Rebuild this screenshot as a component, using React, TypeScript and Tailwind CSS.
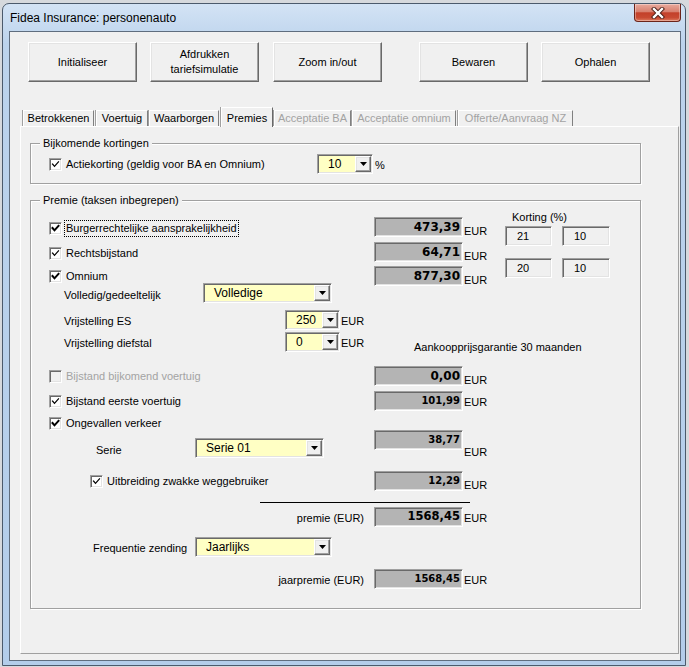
import React from 'react';

const sunken =
  'border border-t-[#a0a0a0] border-l-[#a0a0a0] border-b-white border-r-white shadow-[inset_1px_1px_0_#696969,inset_-1px_-1px_0_#e3e3e3]';
const raised =
  'border border-t-white border-l-white border-b-[#696969] border-r-[#696969] shadow-[inset_-1px_-1px_0_#a0a0a0,inset_1px_1px_0_#e3e3e3]';

const CheckBox = ({ checked = true, bold = false, disabled = false }: { checked?: boolean; bold?: boolean; disabled?: boolean }) => (
  <span
    className={`w-[13px] h-[13px] shrink-0 flex items-center justify-center border border-t-[#a0a0a0] border-l-[#a0a0a0] border-b-white border-r-white shadow-[inset_1px_1px_0_#696969,inset_-1px_-1px_0_#e3e3e3] ${
      disabled ? 'bg-[#f0f0f0]' : 'bg-white'
    }`}
  >
    {checked && (
      <svg width="9" height="9" viewBox="0 0 9 9">
        <polyline
          points="1.5,4 3.5,6.3 7.5,1.8"
          fill="none"
          stroke="#000"
          strokeWidth={bold ? 2 : 1.2}
          strokeLinecap="square"
        />
      </svg>
    )}
  </span>
);

const Combo = ({ value, w }: { value: string; w: string }) => (
  <div className={`${w} h-[20px] bg-[#ffffc4] ${sunken} flex p-[1px]`}>
    <div className="flex-1 flex items-center pl-[9px] text-[12px] leading-none">{value}</div>
    <div className={`w-[16px] h-full bg-[#f0f0f0] ${raised} flex items-center justify-center`}>
      <svg width="7" height="4" viewBox="0 0 7 4">
        <path d="M0 0H7L3.5 4Z" fill="#000" />
      </svg>
    </div>
  </div>
);

const ValueBox = ({ v, small = false, mid = false }: { v: string; small?: boolean; mid?: boolean }) => (
  <div
    className={`w-[89px] h-[20px] shrink-0 bg-[#b4b4b4] ${sunken} flex items-center justify-end pr-[2px] font-['DejaVu_Sans',Verdana,sans-serif] font-bold leading-none ${
      small ? 'text-[10px]' : mid ? 'text-[11.5px]' : 'text-[12px]'
    }`}
  >
    {v}
  </div>
);

const KortingBox = ({ v, w }: { v: string; w: string }) => (
  <div className={`${w} h-[20px] bg-[#f0f0f0] ${sunken} flex items-center pl-[11px] leading-none`}>{v}</div>
);

const Eur = ({ low = false }: { low?: boolean }) => (
  <span className={`ml-[1px] leading-[11px] ${low ? 'self-end' : 'pt-[3px]'}`}>EUR</span>
);

const Btn = ({ children, className = '' }: { children: React.ReactNode; className?: string }) => (
  <div
    className={`w-[109px] h-[40px] bg-[#f0f0f0] ${raised} flex items-center justify-center text-center leading-[15px] ${className}`}
  >
    {children}
  </div>
);

const tabs = [
  { t: 'Betrokkenen', w: 'w-[71px]', ml: 'ml-0' },
  { t: 'Voertuig', w: 'w-[52px]', ml: 'ml-[2px]' },
  { t: 'Waarborgen', w: 'w-[70px]', ml: 'ml-[1px]' },
  { t: 'Premies', w: 'w-[52px]', ml: 'ml-[2px]', active: true },
  { t: 'Acceptatie BA', w: 'w-[77px]', ml: 'ml-[1px]', off: true },
  { t: 'Acceptatie omnium', w: 'w-[104px]', ml: 'ml-[1px]', off: true },
  { t: 'Offerte/Aanvraag NZ', w: 'w-[115px]', ml: 'ml-[2px]', off: true },
];

export default function App() {
  return (
    <div className="w-[689px] h-[667px] overflow-hidden bg-[#d6d9dd] font-['Liberation_Sans',Arial,sans-serif] text-[11px] text-black">
      {/* window */}
      <div className="mt-[3px] ml-[2px] w-[684px] h-[663px] rounded-t-[7px] border border-[#4b5a6c] bg-[linear-gradient(to_bottom,#d3e3f5,#bcd3ec_40px,#b3cdea)]">
        {/* title bar */}
        <div className="h-[27px] flex justify-between">
          <div className="pl-[7px] flex items-center text-[12px]">Fidea Insurance: personenauto</div>
          <div className="mr-[4px] w-[47px] h-[18px] rounded-b-[4px] border border-t-0 border-[#6b241a] bg-[linear-gradient(to_bottom,#e9aa9d,#d8806f_45%,#c3402a_52%,#c84a32_80%,#dd7a5e)] flex items-center justify-center shadow-[inset_0_0_0_1px_rgba(255,255,255,0.35)]">
            <svg width="14" height="12" viewBox="0 0 14 12">
              <path d="M3 2L11 10M11 2L3 10" stroke="#4a1c14" strokeWidth="4.2" strokeLinecap="square" />
              <path d="M3 2L11 10M11 2L3 10" stroke="#fff" strokeWidth="2.4" strokeLinecap="square" />
            </svg>
          </div>
        </div>

        {/* client area */}
        <div className="ml-[6px] w-[672px] h-[630px] border border-[#5f6d7e] bg-[#f0f0f0]">
          {/* buttons */}
          <div className="pt-[10px] pl-[18px] flex">
            <Btn>Initialiseer</Btn>
            <Btn className="ml-[13px]">
              Afdrukken
              <br />
              tariefsimulatie
            </Btn>
            <Btn className="ml-[14px]">Zoom in/out</Btn>
            <Btn className="ml-[37px]">Bewaren</Btn>
            <Btn className="ml-[13px]">Ophalen</Btn>
          </div>

          {/* tabs */}
          <div className="mt-[26px] h-[18px] pl-[13px] flex items-end">
            {tabs.map((t) =>
              t.active ? (
                <div
                  key={t.t}
                  className={`${t.w} ${t.ml} h-[20px] -mb-px relative z-10 bg-[#f0f0f0] border-t border-l border-r border-t-white border-l-white border-r-[#696969] shadow-[-1px_0_0_#a0a0a0] flex items-start justify-center pt-[2px] whitespace-nowrap`}
                >
                  {t.t}
                </div>
              ) : (
                <div
                  key={t.t}
                  className={`${t.w} ${t.ml} h-[16px] bg-[#f0f0f0] border-t border-l border-r border-t-white border-l-white border-r-[#808080] shadow-[-1px_0_0_#a0a0a0] flex items-center justify-center whitespace-nowrap ${
                    t.off ? 'text-[#a3a3a3]' : 'text-black'
                  }`}
                >
                  {t.t}
                </div>
              )
            )}
          </div>

          {/* tab page */}
          <div className="ml-[10px] w-[659px] h-[528px] border border-t-white border-l-white border-b-[#a0a0a0] border-r-[#a0a0a0] pt-[16px] pl-[9px]">
            {/* Bijkomende kortingen */}
            <div className="relative w-[611px] border border-[#a0a0a0] shadow-[1px_1px_0_#fff,inset_1px_1px_0_#fff] pt-[10px] pb-[9px] pl-[18px]">
              <span className="absolute -top-[8px] left-[9px] px-[3px] bg-[#f0f0f0] leading-[14px]">
                Bijkomende kortingen
              </span>
              <div className="h-[20px] flex items-center">
                <div className="w-[268px] flex items-center">
                  <CheckBox />
                  <span className="ml-[4px]">Actiekorting (geldig voor BA en Omnium)</span>
                </div>
                <Combo value="10" w="w-[56px]" />
                <span className="ml-[2px] pt-[3px]">%</span>
              </div>
            </div>

            {/* Premie */}
            <div className="relative mt-[16px] w-[611px] border border-[#a0a0a0] shadow-[1px_1px_0_#fff,inset_1px_1px_0_#fff] pl-[18px] pb-[19px]">
              <span className="absolute -top-[8px] left-[9px] px-[3px] bg-[#f0f0f0] leading-[14px]">
                Premie (taksen inbegrepen)
              </span>

              {/* section 1 */}
              <div className="h-[155px] flex">
                <div className="w-[325px] flex flex-col">
                  <div className="mt-[18px] h-[18px] flex items-center">
                    <CheckBox bold />
                    <span className="ml-[2px] px-[1px] h-[17px] flex items-center border border-dotted border-black">
                      Burgerrechtelijke aansprakelijkheid
                    </span>
                  </div>
                  <div className="mt-[7px] h-[18px] flex items-center">
                    <CheckBox />
                    <span className="ml-[4px]">Rechtsbijstand</span>
                  </div>
                  <div className="mt-[5px] h-[18px] flex items-center">
                    <CheckBox bold />
                    <span className="ml-[4px]">Omnium</span>
                  </div>
                  <div className="-mt-[2px] h-[20px] flex items-center">
                    <span className="w-[154px] pl-[15px] pt-[5px]">Volledig/gedeeltelijk</span>
                    <Combo value="Volledige" w="w-[129px]" />
                  </div>
                  <div className="mt-[7px] h-[20px] flex items-center">
                    <span className="w-[236px] pl-[15px] pt-[3px]">Vrijstelling ES</span>
                    <Combo value="250" w="w-[55px]" />
                    <span className="ml-[1px] pt-[3px]">EUR</span>
                  </div>
                  <div className="mt-[2px] h-[20px] flex items-center">
                    <span className="w-[236px] pl-[15px] pt-[3px]">Vrijstelling diefstal</span>
                    <Combo value="0" w="w-[55px]" />
                    <span className="ml-[1px] pt-[3px]">EUR</span>
                  </div>
                </div>

                <div className="flex flex-col">
                  <div className="flex">
                    <div className="w-[131px] flex flex-col">
                      <div className="mt-[16px] flex">
                        <ValueBox v="473,39" />
                        <Eur low />
                      </div>
                      <div className="mt-[5px] flex">
                        <ValueBox v="64,71" />
                        <Eur low />
                      </div>
                      <div className="mt-[4px] flex">
                        <ValueBox v="877,30" />
                        <Eur low />
                      </div>
                    </div>
                    <div className="flex flex-col">
                      <div className="mt-[9px] ml-[7px] h-[14px] leading-[14px]">Korting (%)</div>
                      <div className="mt-[2px] flex">
                        <KortingBox v="21" w="w-[47px]" />
                        <div className="ml-[10px]">
                          <KortingBox v="10" w="w-[48px]" />
                        </div>
                      </div>
                      <div className="mt-[12px] flex">
                        <KortingBox v="20" w="w-[47px]" />
                        <div className="ml-[10px]">
                          <KortingBox v="10" w="w-[48px]" />
                        </div>
                      </div>
                    </div>
                  </div>
                  <div className="mt-[54px] ml-[40px] h-[14px] leading-[14px]">Aankoopprijsgarantie 30 maanden</div>
                </div>
              </div>

              {/* section 2 */}
              <div className="mt-[10px] h-[20px] flex items-center">
                <div className="w-[325px] flex items-center">
                  <CheckBox checked={false} disabled />
                  <span className="ml-[4px] text-[#a3a3a3]">Bijstand bijkomend voertuig</span>
                </div>
                <ValueBox v="0,00" />
                <Eur low />
              </div>
              <div className="mt-[5px] h-[20px] flex items-center">
                <div className="w-[325px] flex items-center">
                  <CheckBox />
                  <span className="ml-[4px]">Bijstand eerste voertuig</span>
                </div>
                <ValueBox v="101,99" small />
                <Eur />
              </div>
              <div className="mt-[5px] h-[14px] flex items-center">
                <CheckBox bold />
                <span className="ml-[4px]">Ongevallen verkeer</span>
              </div>
              <div className="h-[28px] flex items-start">
                <div className="mt-[8px] w-[325px] h-[20px] flex items-center">
                  <span className="w-[146px] pl-[47px] pt-[4px]">Serie</span>
                  <Combo value="Serie 01" w="w-[129px]" />
                </div>
                <ValueBox v="38,77" small />
                <Eur low />
              </div>
              <div className="mt-[13px] h-[20px] flex items-center">
                <div className="w-[325px] pl-[41px] flex items-center">
                  <CheckBox />
                  <span className="ml-[4px]">Uitbreiding zwakke weggebruiker</span>
                </div>
                <ValueBox v="12,29" small />
                <Eur low />
              </div>
              <div className="mt-[11px] ml-[211px] w-[210px] h-px bg-black" />
              <div className="mt-[4px] h-[20px] flex items-center">
                <div className="w-[325px] pr-[10px] pt-[2px] text-right">premie (EUR)</div>
                <ValueBox v="1568,45" mid />
                <Eur />
              </div>
              <div className="mt-[10px] h-[20px] flex items-center">
                <span className="w-[146px] pl-[44px] pt-[2px]">Frequentie zending</span>
                <Combo value="Jaarlijks" w="w-[137px]" />
              </div>
              <div className="mt-[12px] h-[20px] flex items-center">
                <div className="w-[325px] pr-[10px] pt-[2px] text-right">jaarpremie (EUR)</div>
                <ValueBox v="1568,45" small />
                <Eur />
              </div>
            </div>
          </div>
        </div>
      </div>
    </div>
  );
}
